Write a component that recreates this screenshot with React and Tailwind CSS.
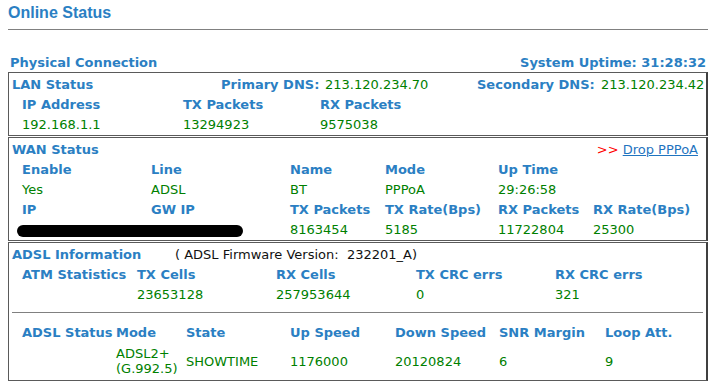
import React from 'react';

// router status page: blue bold labels, green values
const BLUE = 'text-[#2b7fc3]';

function Label({ children, className = '' }) {
  return <span className={`font-bold text-[#2b7fc3] whitespace-nowrap ${className}`}>{children}</span>;
}

function Val({ children, className = '' }) {
  return <span className={`text-[#008000] whitespace-nowrap ${className}`}>{children}</span>;
}

function Box({ children }) {
  return (
    <div className="w-[700px] border border-[#5a5a5a] border-r-2 border-r-[#404040] py-px">
      {children}
    </div>
  );
}

export default function App() {
  return (
    <div className="w-[719px] h-[389px] bg-white pl-[8px] font-['DejaVu_Sans',Verdana,sans-serif] text-[13px] leading-[15px] overflow-hidden">
      {/* title + rule */}
      <div className="w-[700px] h-[30px] border-b border-[#808080] pt-[3px]">
        <h1 className={`font-['Liberation_Sans',Arial,sans-serif] font-bold text-[16px] leading-[19px] ${BLUE}`}>
          Online Status
        </h1>
      </div>

      <div className="w-[700px] mt-[22px] h-5 flex items-center justify-between pl-[2px] pr-[2px]">
        <Label>Physical Connection</Label>
        <Label>System Uptime: 31:28:32</Label>
      </div>

      <div className="flex flex-col gap-px">
        {/* LAN */}
        <Box>
          <div className="h-5 grid grid-cols-[209px_104px_152px_124px_1fr] items-center pl-[3px]">
            <Label>LAN Status</Label>
            <Label>Primary DNS:</Label>
            <Val>213.120.234.70</Val>
            <Label>Secondary DNS:</Label>
            <Val>213.120.234.42</Val>
          </div>
          <div className="h-5 grid grid-cols-[161px_137px_1fr] items-center pl-[13px]">
            <Label>IP Address</Label>
            <Label>TX Packets</Label>
            <Label>RX Packets</Label>
          </div>
          <div className="h-5 grid grid-cols-[161px_137px_1fr] items-center pl-[13px]">
            <Val>192.168.1.1</Val>
            <Val>13294923</Val>
            <Val>9575038</Val>
          </div>
        </Box>

        {/* WAN */}
        <Box>
          <div className="h-5 flex items-center justify-between pl-[3px] pr-[8px]">
            <Label>WAN Status</Label>
            <span className="whitespace-nowrap">
              <span className="text-[#ff0000]">&gt;&gt; </span>
              <a className="text-[#1f74bf] underline">Drop PPPoA</a>
            </span>
          </div>
          <div className="h-5 grid grid-cols-[129px_139px_95px_113px_95px_1fr] items-center pl-[13px]">
            <Label>Enable</Label>
            <Label>Line</Label>
            <Label>Name</Label>
            <Label>Mode</Label>
            <Label>Up Time</Label>
            <span />
          </div>
          <div className="h-5 grid grid-cols-[129px_139px_95px_113px_95px_1fr] items-center pl-[13px]">
            <Val>Yes</Val>
            <Val>ADSL</Val>
            <Val>BT</Val>
            <Val>PPPoA</Val>
            <Val>29:26:58</Val>
            <span />
          </div>
          <div className="h-5 grid grid-cols-[129px_139px_95px_113px_95px_1fr] items-center pl-[13px]">
            <Label>IP</Label>
            <Label>GW IP</Label>
            <Label>TX Packets</Label>
            <Label>TX Rate(Bps)</Label>
            <Label>RX Packets</Label>
            <Label>RX Rate(Bps)</Label>
          </div>
          <div className="h-5 grid grid-cols-[129px_139px_95px_113px_95px_1fr] items-center pl-[13px]">
            <div className="col-span-2 -ml-[5px] w-[226px] h-[12px] mt-[3px] bg-black rounded-full" />
            <Val>8163454</Val>
            <Val>5185</Val>
            <Val>11722804</Val>
            <Val>25300</Val>
          </div>
        </Box>

        {/* ADSL */}
        <Box>
          <div className="h-5 grid grid-cols-[163px_1fr] items-center pl-[3px]">
            <Label>ADSL Information</Label>
            <span className="text-[#111] whitespace-pre">( ADSL Firmware Version:  232201_A)</span>
          </div>
          <div className="h-5 grid grid-cols-[115px_139px_140px_139px_1fr] items-center pl-[13px]">
            <Label>ATM Statistics</Label>
            <Label>TX Cells</Label>
            <Label>RX Cells</Label>
            <Label>TX CRC errs</Label>
            <Label>RX CRC errs</Label>
          </div>
          <div className="h-5 grid grid-cols-[115px_139px_140px_139px_1fr] items-center pl-[13px]">
            <span />
            <Val>23653128</Val>
            <Val>257953644</Val>
            <Val>0</Val>
            <Val>321</Val>
          </div>
          <div className="h-[18px] pt-[8px] px-[3px]">
            <div className="h-px bg-[#808080]" />
          </div>
          <div className="h-[21px] grid grid-cols-[94px_70px_104px_105px_104px_106px_1fr] items-center pl-[13px]">
            <Label>ADSL Status</Label>
            <Label>Mode</Label>
            <Label>State</Label>
            <Label>Up Speed</Label>
            <Label>Down Speed</Label>
            <Label>SNR Margin</Label>
            <Label>Loop Att.</Label>
          </div>
          <div className="h-[36px] grid grid-cols-[94px_70px_104px_105px_104px_106px_1fr] items-center pl-[13px]">
            <span />
            <Val className="leading-[15.5px]">
              ADSL2+
              <br />
              (G.992.5)
            </Val>
            <Val>SHOWTIME</Val>
            <Val>1176000</Val>
            <Val>20120824</Val>
            <Val>6</Val>
            <Val>9</Val>
          </div>
        </Box>
      </div>
    </div>
  );
}
